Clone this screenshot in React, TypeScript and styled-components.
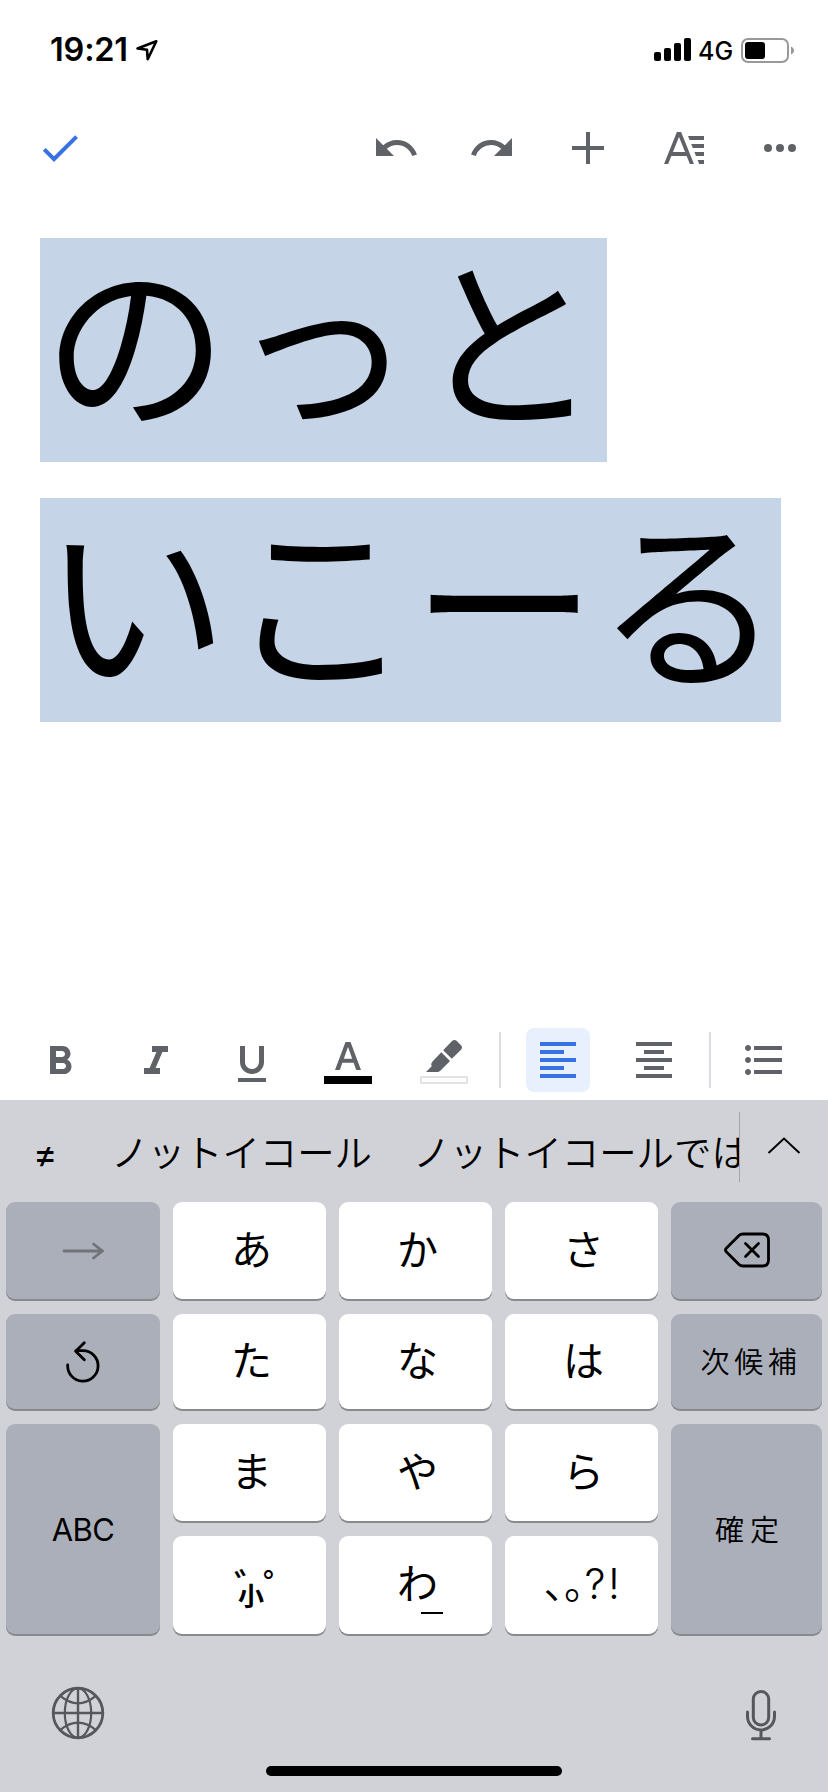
import React from "react";
import styled, { createGlobalStyle } from "styled-components";
import {
  MdCheck,
  MdFormatAlignCenter,
  MdFormatAlignLeft,
  MdFormatBold,
  MdFormatColorText,
  MdFormatItalic,
  MdFormatListBulleted,
  MdFormatUnderlined,
  MdRedo,
  MdUndo,
} from "react-icons/md";

const sans = `Inter, "Noto Sans CJK JP", sans-serif`;
const jp = `"Noto Sans CJK JP", sans-serif`;
const grey = "#5f6368";
const blue = "#3871e0";

const GlobalStyle = createGlobalStyle`
  html, body { margin: 0; padding: 0; background: #fff; }
  *, *::before, *::after { box-sizing: border-box; }
  svg { display: block; flex: none; }
`;

const Screen = styled.div`
  width: 828px;
  height: 1792px;
  display: flex;
  flex-direction: column;
  overflow: hidden;
  background: #fff;
  color: #000;
  font-family: ${sans};
`;

const StatusBar = styled.header`
  flex: none;
  height: 88px;
  padding: 12px 34px 0 50px;
  display: flex;
  align-items: center;
`;

const Clock = styled.span`
  font-size: 32.5px;
  font-weight: 600;
  letter-spacing: -0.2px;
  line-height: 40px;
  width: 85px;
  white-space: nowrap;
`;

const StatusRight = styled.div`
  margin-left: auto;
  display: flex;
  align-items: center;
`;

const Carrier = styled.span`
  font-size: 25px;
  font-weight: 500;
  line-height: 28px;
  width: 35px;
  margin: 2px 8px 0 7px;
  white-space: nowrap;
`;

const Toolbar = styled.nav`
  flex: none;
  height: 120px;
  padding: 0 24px 0 36px;
  display: flex;
  align-items: center;
  gap: 48px;
  color: ${grey};
`;

const ToolButton = styled.button<{ $drop?: number; $tone?: string; $push?: boolean }>`
  width: 48px;
  height: 48px;
  padding: 0;
  border: 0;
  background: none;
  flex: none;
  display: flex;
  flex-direction: column;
  align-items: center;
  justify-content: center;
  color: ${(p) => p.$tone ?? grey};
  margin-top: ${(p) => p.$drop ?? 0}px;
  margin-right: ${(p) => (p.$push ? "auto" : "0")};
`;

const Document = styled.main`
  flex: none;
  height: 812px;
  padding: 30px 0 0 40px;
  display: flex;
  flex-direction: column;
  align-items: flex-start;
  gap: 36px;
`;

const SelectedLine = styled.p<{ $width: number; $tracking: number }>`
  margin: 0;
  padding-left: 3px;
  width: ${(p) => p.$width}px;
  height: 224px;
  background: #c6d4e7;
  font-family: ${jp};
  font-size: 185px;
  line-height: 193px;
  letter-spacing: ${(p) => p.$tracking}px;
  white-space: nowrap;
`;

const FormatBar = styled.nav`
  flex: none;
  height: 80px;
  padding-left: 36px;
  display: flex;
  align-items: center;
`;

const ToolGroup = styled.div`
  display: flex;
  align-items: center;
  gap: 48px;
`;

const Divider = styled.i<{ $left: number; $right: number }>`
  width: 2px;
  height: 56px;
  margin: 0 ${(p) => p.$right}px 0 ${(p) => p.$left}px;
  background: #dadce0;
`;

const LetterIcon = styled.span`
  display: block;
  height: 36px;
  overflow: hidden;
`;

const Swatch = styled.i<{ $color: string; $border: string }>`
  display: block;
  width: 48px;
  height: 8px;
  margin-top: 4px;
  background: ${(p) => p.$color};
  border: 2px solid ${(p) => p.$border};
`;

const ActiveTool = styled.div`
  width: 64px;
  height: 64px;
  margin-right: 40px;
  border-radius: 8px;
  background: #e8effd;
  display: flex;
  align-items: center;
  justify-content: center;
`;

const Keyboard = styled.section`
  flex: 1;
  background: #d1d2d8;
  display: flex;
  flex-direction: column;
`;

const Candidates = styled.div`
  flex: none;
  height: 102px;
  display: flex;
  align-items: flex-start;
  padding-top: 12px;
`;

const CandidateList = styled.div`
  width: 740px;
  height: 70px;
  padding-left: 33px;
  overflow: hidden;
  display: flex;
  border-right: 1px solid #a4a6ab;
  font-family: ${jp};
  font-weight: 350;
  font-size: 37.4px;
  line-height: 78px;
  white-space: nowrap;
`;

const Candidate = styled.span<{ $width: number }>`
  flex: none;
  width: ${(p) => p.$width}px;
`;

const SymbolCandidate = styled(Candidate)`
  font-family: ${sans};
  font-size: 37px;
  font-weight: 400;
  line-height: 84px;
`;

const ExpandButton = styled.button`
  border: 0;
  background: none;
  padding: 24px 0 0 27px;
`;

const KeyGrid = styled.div`
  flex: none;
  display: grid;
  grid-template-columns: 154px 153px 153px 153px 151px;
  grid-template-rows: 97px 95px 97px 98px;
  gap: 15px 13px;
  padding: 0 6px;
`;

const Key = styled.button<{ $dark?: boolean; $tall?: boolean }>`
  border: 0;
  padding: 0;
  border-radius: 9px;
  background: ${(p) => (p.$dark ? "#abafba" : "#fff")};
  box-shadow: 0 2px 0 #898a8e;
  grid-row: ${(p) => (p.$tall ? "span 2" : "auto")};
  display: flex;
  align-items: center;
  justify-content: center;
  color: #000;
`;

const Kana = styled.span`
  font-family: ${jp};
  font-size: 41px;
  line-height: 60px;
  padding: 0 0 8px 4px;
`;

const Latin = styled.span`
  font-family: ${sans};
  font-weight: 400;
  font-size: 31px;
  letter-spacing: -0.6px;
`;

const Command = styled.span<{ $gap: number; $left: number }>`
  font-family: ${jp};
  font-weight: 350;
  font-size: 29px;
  line-height: 44px;
  letter-spacing: ${(p) => p.$gap}px;
  padding-left: ${(p) => p.$left}px;
  padding-bottom: 3px;
  white-space: nowrap;
`;

const MarkKey = styled.span`
  display: grid;
  grid-template-columns: 29px 16px;
  grid-template-rows: 16px 28px;
  font-family: ${jp};
  font-weight: 500;
  font-size: 38px;
  line-height: 44px;
  padding-left: 14px;
  text-align: left;
`;

const SmallMark = styled.span`
  grid-column: 1 / 3;
  width: 34px;
  text-align: center;
  font-size: 26px;
  font-weight: 700;
  line-height: 32px;
`;

const Underscored = styled.span`
  position: relative;
  display: flex;
`;

const UnderscoreMark = styled.i`
  position: absolute;
  left: 28px;
  top: 61px;
  width: 22px;
  height: 2px;
  background: #000;
`;

const Punctuation = styled.span`
  display: flex;
  align-items: baseline;
  font-family: ${jp};
  font-weight: 350;
  font-feature-settings: "halt";
  font-size: 41px;
  line-height: 60px;
  padding: 0 0 8px 3px;
`;

const Marks = styled.span`
  font-family: Inter, sans-serif;
  font-weight: 350;
  font-size: 42px;
  line-height: 50px;
  letter-spacing: 2.5px;
`;

const BottomRow = styled.div`
  flex: none;
  height: 132px;
  padding: 52px 52px 0 51px;
  display: flex;
  justify-content: space-between;
  align-items: flex-start;
`;

const Dictation = styled.span`
  margin-top: 4px;
`;

const HomeIndicator = styled.i`
  width: 296px;
  height: 10px;
  border-radius: 5px;
  background: #000;
  margin: 0 auto;
`;

const LocationIcon = () => (
  <svg width="24" height="24" viewBox="0 0 24 24" fill="none" stroke="#000" strokeWidth="2.6" strokeLinejoin="round">
    <path d="M2.5 10.5 21.3 3.3 12.7 21.2 12 11.8Z" />
  </svg>
);

const SignalIcon = () => (
  <svg width="37" height="24" viewBox="0 0 37 24">
    <rect x="0" y="14" width="7" height="9" rx="2" />
    <rect x="10" y="10" width="7" height="13" rx="2" />
    <rect x="20" y="5" width="7" height="18" rx="2" />
    <rect x="30" y="0" width="7" height="23" rx="2" />
  </svg>
);

const BatteryIcon = () => (
  <svg width="53" height="25" viewBox="0 0 53 25">
    <rect x="1" y="1" width="46" height="23" rx="6" fill="none" stroke="#999" strokeWidth="2" />
    <rect x="4" y="4" width="20" height="17" rx="3" />
    <path d="M50 8.5c4 1.5 4 6.5 0 8Z" fill="#999" />
  </svg>
);

const PlusIcon = () => (
  <svg width="32" height="32" viewBox="0 0 32 32" fill="none" stroke="currentColor" strokeWidth="4">
    <path d="M16 0V32M0 16H32" />
  </svg>
);

const FormatIcon = () => (
  <svg width="40" height="32" viewBox="0 0 40 32" fill="none" stroke="currentColor">
    <path d="M1.9 32.5 14.2 1.8H15.8L28.1 32.5M6.5 22H23.5" strokeWidth="3.8" />
    <path
      d="M24 4H40V8H25.6ZM27.2 12H40V16H28.8ZM30.4 20H40V24H32ZM33.6 28H40V32H35.2Z"
      fill="currentColor"
      stroke="none"
    />
  </svg>
);

const MoreIcon = () => (
  <svg width="32" height="8" viewBox="0 0 32 8" fill="currentColor">
    <circle cx="4" cy="4" r="4" />
    <circle cx="16" cy="4" r="4" />
    <circle cx="28" cy="4" r="4" />
  </svg>
);

const HighlighterIcon = () => (
  <svg width="48" height="36" viewBox="0 0 48 36" fill="currentColor">
    <path d="M6 36 11.7 30.2Q10.4 27.5 12.5 25.4L21.3 16.2 30 25 20 35Q18.8 36 17.5 36Z" />
    <path d="M23.2 14.2 32 5Q34.5 3 36.8 5L41 9.2Q43 11.5 41 13.8L31.8 22.8Z" />
  </svg>
);

const CaretUpIcon = () => (
  <svg width="34" height="18" viewBox="0 0 34 18" fill="none" stroke="#000" strokeWidth="2">
    <path d="M1.5 17 17 2.5 32.5 17" />
  </svg>
);

const ArrowIcon = () => (
  <svg width="42" height="18" viewBox="0 0 42 18" fill="none" stroke="#727379" strokeWidth="2.8" strokeLinecap="round" strokeLinejoin="round">
    <path d="M2 9H40.5M31.5 2 40.5 9 31.5 16" />
  </svg>
);

const RevertIcon = () => (
  <svg width="34" height="42" viewBox="0 0 34 42" fill="none" stroke="#000" strokeWidth="2.8" strokeLinecap="round" strokeLinejoin="round">
    <path d="M1.7 24A15.2 15.2 0 1 0 16.9 9.7H10" />
    <path d="M18.3 1.8 9.7 10.3 18.3 18.8" />
  </svg>
);

const BackspaceIcon = () => (
  <svg width="46" height="38" viewBox="0 0 46 38" fill="none" stroke="#000" strokeWidth="2.8" strokeLinecap="round" strokeLinejoin="round">
    <path d="M19 2H38.5Q44.5 2 44.5 8V28Q44.5 34 38.5 34H19Q16.5 34 15 32.5L2.5 20Q.5 18 2.5 16L15 3.5Q16.5 2 19 2Z" />
    <path d="M21.5 11.5 34.5 24.5M34.5 11.5 21.5 24.5" />
  </svg>
);

const GlobeIcon = () => (
  <svg width="54" height="54" viewBox="0 0 54 54" fill="none" stroke="#54575c">
    <circle cx="27" cy="27" r="24.8" strokeWidth="2.8" />
    <path d="M2 27H52M27 2V52" strokeWidth="2.4" />
    <ellipse cx="27" cy="27" rx="13.2" ry="24.8" strokeWidth="2.2" />
    <path d="M9.5 10.2Q27 24.5 44.5 10.2M9.5 43.8Q27 29.5 44.5 43.8" strokeWidth="2.2" />
  </svg>
);

const MicIcon = () => (
  <svg width="30" height="51" viewBox="0 0 30 51" fill="none" stroke="#54575c" strokeWidth="3" strokeLinecap="round">
    <rect x="7.3" y="1.5" width="15.4" height="33.5" rx="7.7" />
    <path d="M1.5 22V26.5A13.5 13.5 0 0 0 28.5 26.5V22M15 40.5V48M6.5 48.8H23.5" />
  </svg>
);

export default function App() {
  return (
    <Screen>
      <GlobalStyle />
      <StatusBar>
        <Clock>19:21</Clock>
        <LocationIcon />
        <StatusRight>
          <SignalIcon />
          <Carrier>4G</Carrier>
          <BatteryIcon />
        </StatusRight>
      </StatusBar>

      <Toolbar>
        <ToolButton $tone={blue} $push><MdCheck size={48} /></ToolButton>
        <ToolButton><MdUndo size={48} /></ToolButton>
        <ToolButton><MdRedo size={48} /></ToolButton>
        <ToolButton><PlusIcon /></ToolButton>
        <ToolButton><FormatIcon /></ToolButton>
        <ToolButton><MoreIcon /></ToolButton>
      </Toolbar>

      <Document>
        <SelectedLine $width={567} $tracking={1.2}>のっと</SelectedLine>
        <SelectedLine $width={741} $tracking={-0.6}>いこーる</SelectedLine>
      </Document>

      <FormatBar>
        <ToolGroup>
          <ToolButton $drop={4}><MdFormatBold size={48} /></ToolButton>
          <ToolButton $drop={4}><MdFormatItalic size={48} /></ToolButton>
          <ToolButton $drop={8}><MdFormatUnderlined size={48} /></ToolButton>
          <ToolButton>
            <LetterIcon><MdFormatColorText size={48} /></LetterIcon>
            <Swatch $color="#000" $border="#000" />
          </ToolButton>
          <ToolButton>
            <HighlighterIcon />
            <Swatch $color="#fff" $border="#e4e4e4" />
          </ToolButton>
        </ToolGroup>
        <Divider $left={31} $right={25} />
        <ActiveTool>
          <ToolButton $tone={blue}><MdFormatAlignLeft size={48} /></ToolButton>
        </ActiveTool>
        <ToolButton><MdFormatAlignCenter size={48} /></ToolButton>
        <Divider $left={31} $right={28.5} />
        <ToolButton><MdFormatListBulleted size={48} /></ToolButton>
      </FormatBar>

      <Keyboard>
        <Candidates>
          <CandidateList>
            <SymbolCandidate $width={78}>≠</SymbolCandidate>
            <Candidate $width={302}>ノットイコール</Candidate>
            <Candidate $width={400}>ノットイコールでは</Candidate>
          </CandidateList>
          <ExpandButton><CaretUpIcon /></ExpandButton>
        </Candidates>

        <KeyGrid>
          <Key $dark><ArrowIcon /></Key>
          <Key><Kana>あ</Kana></Key>
          <Key><Kana>か</Kana></Key>
          <Key><Kana>さ</Kana></Key>
          <Key $dark><BackspaceIcon /></Key>

          <Key $dark><RevertIcon /></Key>
          <Key><Kana>た</Kana></Key>
          <Key><Kana>な</Kana></Key>
          <Key><Kana>は</Kana></Key>
          <Key $dark><Command $gap={4.7} $left={9}>次候補</Command></Key>

          <Key $dark $tall><Latin>ABC</Latin></Key>
          <Key><Kana>ま</Kana></Key>
          <Key><Kana>や</Kana></Key>
          <Key><Kana>ら</Kana></Key>
          <Key $dark $tall><Command $gap={6} $left={7}>確定</Command></Key>

          <Key>
            <MarkKey>
              <span>゛</span>
              <span>゜</span>
              <SmallMark>小</SmallMark>
            </MarkKey>
          </Key>
          <Key>
            <Underscored>
              <Kana>わ</Kana>
              <UnderscoreMark />
            </Underscored>
          </Key>
          <Key>
            <Punctuation>
              、。<Marks>?!</Marks>
            </Punctuation>
          </Key>
        </KeyGrid>

        <BottomRow>
          <GlobeIcon />
          <Dictation><MicIcon /></Dictation>
        </BottomRow>
        <HomeIndicator />
      </Keyboard>
    </Screen>
  );
}
